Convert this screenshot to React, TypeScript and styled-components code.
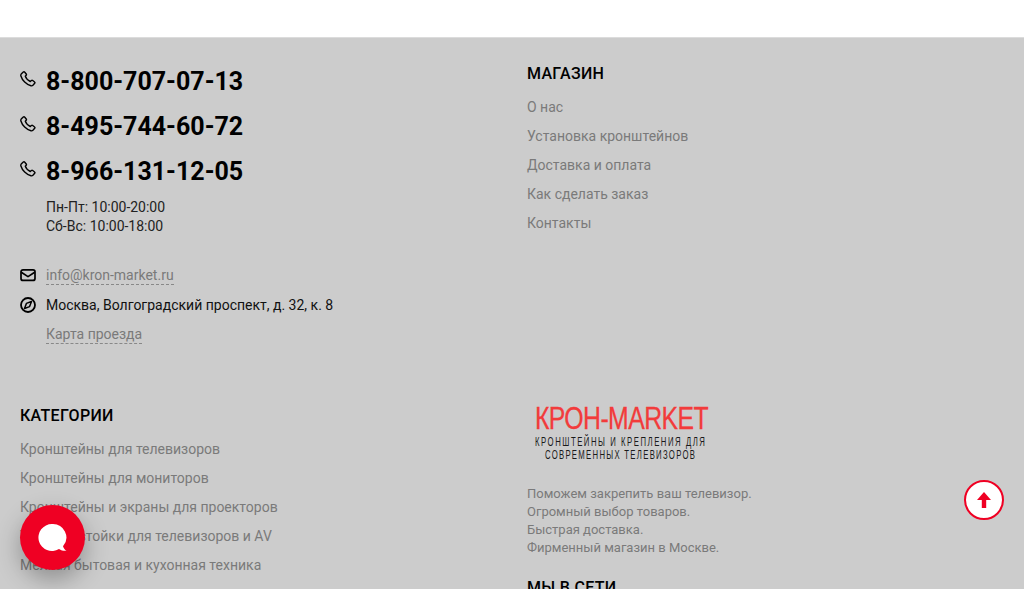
import React from 'react';
import styled, { createGlobalStyle } from 'styled-components';

const Global = createGlobalStyle`
  html, body { margin: 0; padding: 0; height: 589px; overflow: hidden; background: #fff; }
  body { font-family: Roboto, "Noto Sans", sans-serif; }
  a { text-decoration: none; }
`;

const Page = styled.div`
  width: 1025px;
  height: 589px;
  overflow: hidden;
  position: relative;
  padding-top: 37px;
  box-sizing: border-box;
`;

const Footer = styled.footer`
  width: 1024px;
  box-sizing: border-box;
  background: #cccccc;
  border-top: 1px solid #dcdcdc;
  padding: 22px 20px 40px;
  display: grid;
  grid-template-columns: 507px 1fr;
`;

const Section = styled.section<{ $height: number }>`
  height: ${p => p.$height}px;
`;

const PhoneRow = styled.div`
  display: flex;
  align-items: flex-start;
  height: 45px;
`;

const IconSlot = styled.span`
  width: 26px;
  flex: none;
  display: flex;
  color: #000;
`;

const PhoneIconSlot = styled(IconSlot)`
  padding-top: 11px;
`;

const PhoneLink = styled.a`
  font-size: 25px;
  font-weight: 700;
  line-height: 44px;
  color: #000;
`;

const Hours = styled.div`
  margin: 3px 0 0 26px;
  font-size: 14px;
  line-height: 19px;
  color: #222;
`;

const ContactRow = styled.div<{ $top: number }>`
  display: flex;
  align-items: center;
  height: 20px;
  margin-top: ${p => p.$top}px;
  font-size: 14px;
  color: #111;
`;

const DashedLink = styled.a`
  font-size: 14px;
  line-height: 18px;
  color: #7a7a7a;
  border-bottom: 1px dashed #888;
`;

const Heading = styled.h3`
  margin: 0;
  padding-top: 4px;
  font-size: 16px;
  font-weight: 500;
  line-height: 20px;
  color: #000;
  letter-spacing: 0.3px;
  text-transform: uppercase;
`;

const LinkList = styled.ul`
  list-style: none;
  margin: 9px 0 0;
  padding: 0;
`;

const LinkItem = styled.li`
  height: 29px;
  line-height: 29px;
  font-size: 14px;
  color: #7a7a7a;
  white-space: nowrap;

  &:nth-child(6) {
    margin-top: 1px;
  }
`;

const Logo = styled.svg`
  display: block;
  margin: 0 0 0 8px;
`;

const About = styled.p`
  margin: 23px 0 0;
  font-size: 13px;
  line-height: 18px;
  color: #7a7a7a;
`;

const SocialHeading = styled(Heading)`
  margin-top: 17px;
`;

const ChatButton = styled.button`
  position: absolute;
  left: 20px;
  top: 505px;
  width: 65px;
  height: 65px;
  padding: 0;
  border: 0;
  border-radius: 50%;
  background: #ef0023;
  box-shadow: 0 10px 24px rgba(0, 0, 0, 0.3);
  display: flex;
  align-items: center;
  justify-content: center;
`;

const TopButton = styled.button`
  position: absolute;
  left: 964px;
  top: 480px;
  width: 40px;
  height: 40px;
  padding: 0;
  box-sizing: border-box;
  border: 2px solid #ef0023;
  border-radius: 50%;
  background: #fff;
  display: flex;
  align-items: center;
  justify-content: center;
`;

const phones = ['8-800-707-07-13', '8-495-744-60-72', '8-966-131-12-05'];
const shop = ['О нас', 'Установка кронштейнов', 'Доставка и оплата', 'Как сделать заказ', 'Контакты'];
const categories = [
  'Кронштейны для телевизоров',
  'Кронштейны для мониторов',
  'Кронштейны и экраны для проекторов',
  'Тумбы и стойки для телевизоров и AV',
  'Мелкая бытовая и кухонная техника',
  'Тележки для дома и офиса',
];

const PhoneIcon = () => (
  <svg width="16" height="16" viewBox="0 0 16 16" fill="none" stroke="#000" strokeWidth="1.4" strokeLinejoin="round">
    <path d="M1.2 3.1 3.3 1c.4-.4 1-.4 1.3 0l1.6 2c.3.4.3.9 0 1.2L5.3 5.3c.7 2 2.900 4.300 5 5.200l1.100-1c.4-.3.900-.3 1.300 0l1.900 1.500c.4.3.5.9.1 1.300l-1.800 2c-.5.500-1.200.7-1.900.5C6.300 13.600 2.200 9.300.9 5c-.2-.7-.1-1.400.3-1.900z" />
  </svg>
);

const MailIcon = () => (
  <svg width="16" height="16" viewBox="0 0 16 16" fill="none" stroke="#000" strokeWidth="1.7" strokeLinejoin="round">
    <rect x="1" y="2.800" width="14" height="10.600" rx="2" />
    <path d="M1.300 5.200 8 9.600l6.700-4.400" />
  </svg>
);

const CompassIcon = () => (
  <svg width="16" height="16" viewBox="0 0 16 16" fill="none" stroke="#000" strokeLinejoin="round">
    <circle cx="8" cy="8" r="7" strokeWidth="1.800" />
    <path d="M11.500 4.500 9.600 9.600 4.500 11.500 6.400 6.400z" strokeWidth="1.500" />
  </svg>
);

export default function App() {
  return (
    <Page>
      <Global />
      <Footer>
        <Section $height={342}>
          {phones.map(p => (
            <PhoneRow key={p}>
              <PhoneIconSlot><PhoneIcon /></PhoneIconSlot>
              <PhoneLink href="#">{p}</PhoneLink>
            </PhoneRow>
          ))}
          <Hours>Пн-Пт: 10:00-20:00<br />Сб-Вс: 10:00-18:00</Hours>
          <ContactRow $top={29}>
            <IconSlot><MailIcon /></IconSlot>
            <DashedLink href="#">info@kron-market.ru</DashedLink>
          </ContactRow>
          <ContactRow $top={10}>
            <IconSlot><CompassIcon /></IconSlot>
            Москва, Волгоградский проспект, д. 32, к. 8
          </ContactRow>
          <ContactRow $top={9}>
            <IconSlot />
            <DashedLink href="#">Карта проезда</DashedLink>
          </ContactRow>
        </Section>
        <Section $height={342}>
          <Heading>Магазин</Heading>
          <LinkList>
            {shop.map(s => <LinkItem key={s}>{s}</LinkItem>)}
          </LinkList>
        </Section>
        <Section $height={300}>
          <Heading>Категории</Heading>
          <LinkList>
            {categories.map(s => <LinkItem key={s}>{s}</LinkItem>)}
          </LinkList>
        </Section>
        <Section $height={300}>
          <Logo width="180" height="60" viewBox="0 0 180 60">
            <text transform="scale(0.8 1)" x="0" y="27" fill="#f23b3b" stroke="#f23b3b" strokeWidth="0.3" fontFamily="Liberation Sans, sans-serif" fontSize="31" textLength="217" lengthAdjust="spacing">КРОН-MARKET</text>
            <text transform="scale(0.62 1)" x="0" y="44" fill="#1a1a1a" fontFamily="Liberation Sans, sans-serif" fontSize="12.500" textLength="274" lengthAdjust="spacing">КРОНШТЕЙНЫ И КРЕПЛЕНИЯ ДЛЯ</text>
            <text transform="scale(0.62 1)" x="16" y="57" fill="#1a1a1a" fontFamily="Liberation Sans, sans-serif" fontSize="12.500" textLength="242" lengthAdjust="spacing">СОВРЕМЕННЫХ ТЕЛЕВИЗОРОВ</text>
          </Logo>
          <About>
            Поможем закрепить ваш телевизор.<br />
            Огромный выбор товаров.<br />
            Быстрая доставка.<br />
            Фирменный магазин в Москве.
          </About>
          <SocialHeading>Мы в сети</SocialHeading>
        </Section>
      </Footer>
      <ChatButton aria-label="chat">
        <svg width="30" height="30" viewBox="1 0 30 30">
          <path d="M15 1a13.500 13.500 0 1 0 7 25c2 1.400 4.500 2 7.500 1.800-1.800-1-3-2.600-3.500-4.500A13.500 13.500 0 0 0 15 1z" fill="#fff" />
        </svg>
      </ChatButton>
      <TopButton aria-label="top">
        <svg width="14" height="16" viewBox="0 0 14 16">
          <path d="M7 0 14 8H9.200v8H4.800V8H0z" fill="#ef0023" />
        </svg>
      </TopButton>
    </Page>
  );
}
